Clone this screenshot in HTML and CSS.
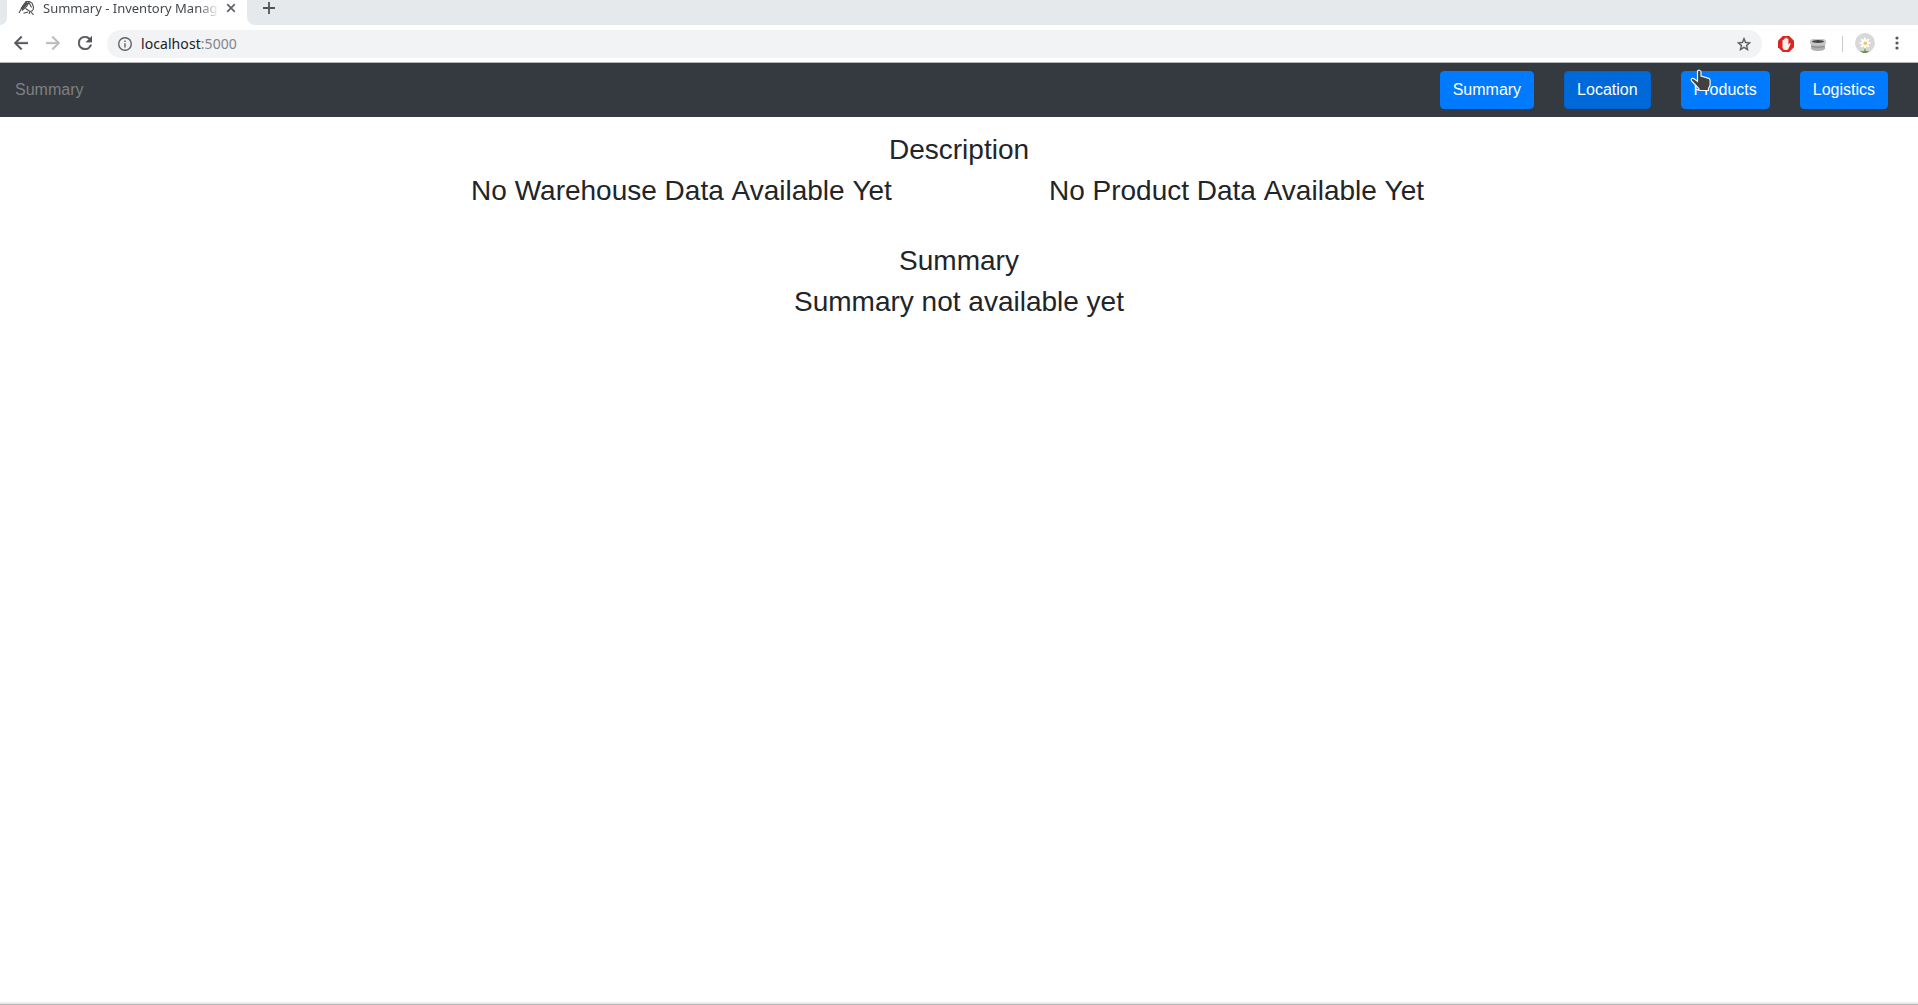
FILE: index.html
```html
<!DOCTYPE html>
<html lang="en">
<head>
<meta charset="utf-8">
<title>Summary - Inventory Management</title>
<link rel="stylesheet" href="styles.css">
</head>
<body>
<div class="tabstrip">
  <div class="strip-edge"></div>
  <div class="tab">
    <svg class="favicon" width="18" height="16" viewBox="0 0 18 16" fill="none" stroke="#4a4a4a" stroke-width="1.100">
      <path d="M1 13 5 5.500 8 1.500h3.500L14 3l1.500 4-.5 3"/>
      <path d="M3.500 9 9.500 2.500" stroke-width="2.400"/>
      <path d="M4 10.500 9 6l2-4M11 2.500l2.500 5M7.500 8.500 12 11.500l3-1M10 12l-4.500 1.300M12 11.500l-1 2.500M13 12l2.500 2.800"/>
    </svg>
    <span class="tab-title">Summary - Inventory Manage</span>
    <svg class="tab-close" width="10" height="10" viewBox="0 0 10 10" stroke="#5f6368" stroke-width="1.7"><path d="M1.2 1.2 8.8 8.8M8.8 1.2 1.2 8.8"/></svg>
  </div>
  <div class="strip-rest">
    <svg width="12" height="12" viewBox="0 0 12 12" stroke="#505458" stroke-width="1.8"><path d="M6 0v12M0 6h12"/></svg>
  </div>
</div>
<div class="toolbar">
  <svg class="nav-icon" width="14" height="14" viewBox="4 4 16 16" fill="#54575b" stroke="#54575b" stroke-width=".4"><path d="M20 11H7.83l5.59-5.59L12 4l-8 8 8 8 1.41-1.41L7.83 13H20v-2z"/></svg>
  <svg class="nav-icon forward" width="14" height="14" viewBox="4 4 16 16" fill="#b9bbbd" stroke="#b9bbbd" stroke-width=".4"><path d="m12 4-1.41 1.41L16.17 11H4v2h12.17l-5.58 5.59L12 20l8-8z"/></svg>
  <svg class="reload" width="14" height="14" viewBox="4 4 16 16" fill="#54575b" stroke="#54575b" stroke-width=".4"><path d="M17.65 6.35A7.96 7.96 0 0 0 12 4a8 8 0 1 0 7.73 10h-2.08A6 6 0 1 1 12 6c1.66 0 3.14.69 4.22 1.78L13 11h7V4l-2.35 2.35z"/></svg>
  <div class="omnibox">
    <svg width="14" height="14" viewBox="2 2 20 20" fill="#5f6368"><path d="M11 17h2v-6h-2v6zm1-15a10 10 0 1 0 0 20 10 10 0 0 0 0-20zm0 18a8 8 0 1 1 0-16 8 8 0 0 1 0 16zM11 9h2V7h-2v2z"/></svg>
    <span class="url">localhost<span class="port">:5000</span></span>
    <svg class="star" width="14" height="14" viewBox="2 2 20 19" fill="#54575b" stroke="#54575b" stroke-width=".4"><path d="m22 9.24-7.19-.62L12 2 9.19 8.63 2 9.24l5.46 4.73L5.82 21 12 17.27 18.18 21l-1.63-7.03L22 9.24zM12 15.4l-3.76 2.27 1-4.28-3.32-2.88 4.38-.38L12 6.1l1.71 4.04 4.38.38-3.32 2.88 1 4.28L12 15.4z"/></svg>
  </div>
  <svg class="ext-block" width="16" height="16" viewBox="0 0 16 16"><path d="M4.8 0h6.400L16 4.800v6.400L11.200 16H4.800L0 11.200V4.800z" fill="#dc2420"/><path d="M4.500 8.300V4.200q.8-.8 1.400 0V3q.8-1 1.500 0V2q.8-.9 1.500 0v1q.8-.9 1.500 0v5.500l1.100-1.200q1.100-.3 1.200.4L11 11.500q-.7 2.300-2 2.500H6.800q-2-.5-2.300-2.500z" fill="#f5f1ef"/></svg>
  <svg class="ext-disk" width="16" height="12" viewBox="0 0 16 12"><path d="M1 4v5.500Q2 12 8 12t7-2.500V4z" fill="#b0b0b0"/><path d="M1.500 7q6.500 1.500 13 0v1q-6.500 1.500-13 0z" fill="#858585"/><rect width="16" height="6.500" rx="3" fill="#c6c6c6"/><ellipse cx="8" cy="2.500" rx="6" ry="1.500" fill="#454545"/></svg>
  <span class="divider"></span>
  <svg class="avatar" width="20" height="20" viewBox="0 0 20 20"><circle cx="10" cy="10" r="10" fill="#d8d8d8"/><path d="M5 18q1.500-.5 2.500.5l2-1V14h1v3.500l1.500.8 2.500-.8-2 2Q10 21 7 19.500z" fill="#6f9347"/><g stroke="#fffdf5" stroke-width="2.200" stroke-linecap="round"><path d="M10 5.500v9M5.500 10h9M6.800 6.800l6.400 6.400M13.200 6.800l-6.400 6.400"/></g><circle cx="10.300" cy="10.300" r="1.800" fill="#f1c45c"/></svg>
  <svg class="menu" width="4" height="14" viewBox="0 0 4 14" fill="#54575b"><circle cx="2" cy="2" r="1.600"/><circle cx="2" cy="7" r="1.600"/><circle cx="2" cy="12" r="1.600"/></svg>
</div>
<nav class="navbar">
  <span class="navbar-text">Summary</span>
  <div class="nav-buttons">
    <a class="btn">Summary</a>
    <a class="btn btn-hover">Location</a>
    <a class="btn">Products
      <svg class="pointer" width="22" height="24" viewBox="0 0 22 24"><path d="M7.500 2Q9.500.2 11 2.500V7l7.800 2.300q1.300.4 1.300 2v5l-1.600 3.200v2H9v-1.800L5.500 16 1.700 12q-1.200-1.500.3-2.500 1.500-.5 2.700.8l2.800 2z" fill="#414141" stroke="#f3f3f3" stroke-width="1.200"/></svg>
    </a>
    <a class="btn">Logistics</a>
  </div>
</nav>
<main class="container">
  <h3>Description</h3>
  <div class="row">
    <h3>No Warehouse Data <span class="word">Available</span> <span class="word">Yet</span></h3>
    <h3>No Product Data <span class="word">Available</span> <span class="word">Yet</span></h3>
  </div>
  <h3>Summary</h3>
  <h3>Summary not available yet</h3>
</main>
<div class="window-edge"></div>
</body>
</html>
```
FILE: styles.css
```css
* { box-sizing: border-box; }
body {
  margin: 0;
  height: 1005px;
  display: flex;
  flex-direction: column;
  overflow: hidden;
  background: #fff;
  color: #212529;
  font: 16px/1.5 "Liberation Sans", Arial, sans-serif;
}
svg { display: block; flex: none; }

.tabstrip { height: 25px; flex: none; display: flex; background: #fff; }
.strip-edge { width: 7px; background: #e5e9ec; border-bottom-right-radius: 7px; }
.tab { width: 240px; display: flex; align-items: flex-start; padding-left: 11px; }
.tab-title {
  width: 176px;
  margin: -1px 0 0 7px;
  overflow: hidden;
  white-space: nowrap;
  font: 13px/18px "Noto Sans", sans-serif;
  color: #45494d;
  -webkit-mask-image: linear-gradient(to right, #000 155px, transparent 176px);
  mask-image: linear-gradient(to right, #000 155px, transparent 176px);
}
.tab-close { margin: 3px 0 0 7px; }
.strip-rest { flex: 1; padding: 2px 0 0 16px; background: #e5e9ec; border-bottom-left-radius: 8px; }

.toolbar {
  height: 38px;
  flex: none;
  display: flex;
  align-items: center;
  padding: 0 19px 1px 14px;
  border-bottom: 1px solid #b5b6b8;
}
.forward { margin-left: 18px; }
.reload { margin-left: 18px; }
.omnibox {
  flex: 1;
  height: 28px;
  margin: 2px 0 0 15px;
  padding: 0 11px;
  display: flex;
  align-items: center;
  border-radius: 14px;
  background: #f1f3f4;
}
.url { margin-left: 9px; font: 14px/20px "Noto Sans", sans-serif; letter-spacing: .07px; color: #202124; }
.port { color: #80868b; }
.star { margin-left: auto; }
.ext-block { margin: 1px 0 0 16px; }
.ext-disk { margin: 4px 0 0 16px; }
.divider { width: 1px; height: 16px; margin: 1px 12px 0 16px; background: #c8cacc; }
.menu { margin-left: 20px; }

.navbar {
  height: 54px;
  flex: none;
  display: flex;
  align-items: center;
  justify-content: space-between;
  padding: 8px 30px 8px 15px;
  background: #343a40;
}
.navbar-text { color: #808080; }
.nav-buttons { display: flex; gap: 30px; }
.btn {
  position: relative;
  padding: 6px 12px;
  border: 1px solid #007bff;
  border-radius: 4px;
  background: #007bff;
  color: #fff;
}
.btn-hover { background: #0069d9; border-color: #0062cc; }
.pointer { position: absolute; left: 8px; top: -3px; }

.container { width: 1140px; margin: 0 auto; padding: 16px 15px 0; text-align: center; }
h3 { margin: 0 0 8px; font-size: 28px; font-weight: 500; line-height: 33px; }
.word { display: inline-block; }
.row { display: grid; grid-template-columns: 1fr 1fr; margin-bottom: 29px; }

.window-edge { flex: none; height: 3px; margin-top: auto; background: #e6e6e6; border-top: 1px solid #eee; border-bottom: 1px solid #b9b9b9; }
```
